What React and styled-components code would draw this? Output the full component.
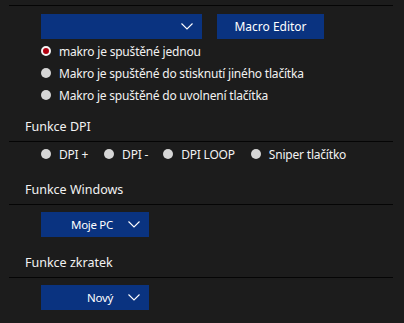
import React from 'react'
import styled, { createGlobalStyle } from 'styled-components'

const Global = createGlobalStyle`
  html, body {
    margin: 0;
    padding: 0;
    background: #1c1c1c;
  }
  body {
    font-family: "Noto Sans", "Open Sans", sans-serif;
    font-size: 12px;
    color: #f2f2f2;
  }
`

const Page = styled.div`
  width: 404px;
  height: 323px;
  padding: 5px 11px 0 9px;
  box-sizing: border-box;
  overflow: hidden;
`

const Line = styled.div`
  height: 1px;
  background: #050505;
`

const Content = styled.div`
  padding-left: 32px;
  padding-top: ${p => p.top || 0}px;
`

const Row = styled.div`
  display: flex;
  align-items: center;
  gap: ${p => p.gap || 0}px;
`

const Select = styled.div`
  width: ${p => p.width}px;
  height: 25px;
  background: #0a3380;
  display: flex;
  align-items: center;
  justify-content: flex-end;
  box-sizing: border-box;
  padding-right: 9px;
  color: #fff;
`

const SelectText = styled.span`
  margin-right: 15px;
  font-size: 11.5px;
  letter-spacing: -0.3px;
`

const Button = styled.div`
  width: 107px;
  height: 25px;
  background: #0a3380;
  display: flex;
  align-items: center;
  justify-content: center;
  color: #fff;
  font-size: 12px;
`

const Options = styled.div`
  display: flex;
  flex-direction: ${p => (p.inline ? 'row' : 'column')};
  gap: ${p => (p.inline ? 0 : 4)}px;
  margin-top: ${p => p.top || 0}px;
`

const Option = styled.label`
  display: flex;
  align-items: center;
  height: 18px;
  margin-right: ${p => p.mr || 0}px;
  white-space: nowrap;
  letter-spacing: -0.2px;
`

const Dot = styled.span`
  width: 10px;
  height: 10px;
  border-radius: 50%;
  background: #d6d6d6;
  margin-right: 8px;
  flex: none;
  box-sizing: border-box;
  ${p => p.on && `
    background: #b00010;
    border: 2px solid #f4f4f4;
  `}
`

const Heading = styled.div`
  padding-left: 16px;
  height: 18px;
  line-height: 18px;
  margin-top: ${p => p.top}px;
  margin-bottom: 5px;
  font-size: 12.5px;
`

const Chevron = () => (
  <svg width="12" height="7" viewBox="0 0 12 7" fill="none">
    <path d="M0.5 0.5 L6 6 L11.5 0.5" stroke="#fff" strokeWidth="1.1" />
  </svg>
)

const Radio = ({ on, children, mr }) => (
  <Option mr={mr}>
    <Dot on={on} />
    {children}
  </Option>
)

export default function App() {
  return (
    <>
      <Global />
      <Page>
        <Line />
        <Content top={8}>
          <Row gap={15}>
            <Select width={161}>
              <Chevron />
            </Select>
            <Button>Macro Editor</Button>
          </Row>
          <Options top={3}>
            <Radio on>makro je spuštěné jednou</Radio>
            <Radio>Makro je spuštěné do stisknutí jiného tlačítka</Radio>
            <Radio>Makro je spuštěné do uvolnení tlačítka</Radio>
          </Options>
        </Content>

        <Heading top={14}>Funkce DPI</Heading>
        <Line />
        <Content top={3}>
          <Options inline>
            <Radio mr={16}>DPI +</Radio>
            <Radio mr={15}>DPI -</Radio>
            <Radio mr={16}>DPI LOOP</Radio>
            <Radio>Sniper tlačítko</Radio>
          </Options>
        </Content>

        <Heading top={18}>Funkce Windows</Heading>
        <Line />
        <Content top={7}>
          <Select width={108}>
            <SelectText>Moje PC</SelectText>
            <Chevron />
          </Select>
        </Content>

        <Heading top={17}>Funkce zkratek</Heading>
        <Line />
        <Content top={7}>
          <Select width={108}>
            <SelectText>Nový</SelectText>
            <Chevron />
          </Select>
        </Content>
      </Page>
    </>
  )
}
